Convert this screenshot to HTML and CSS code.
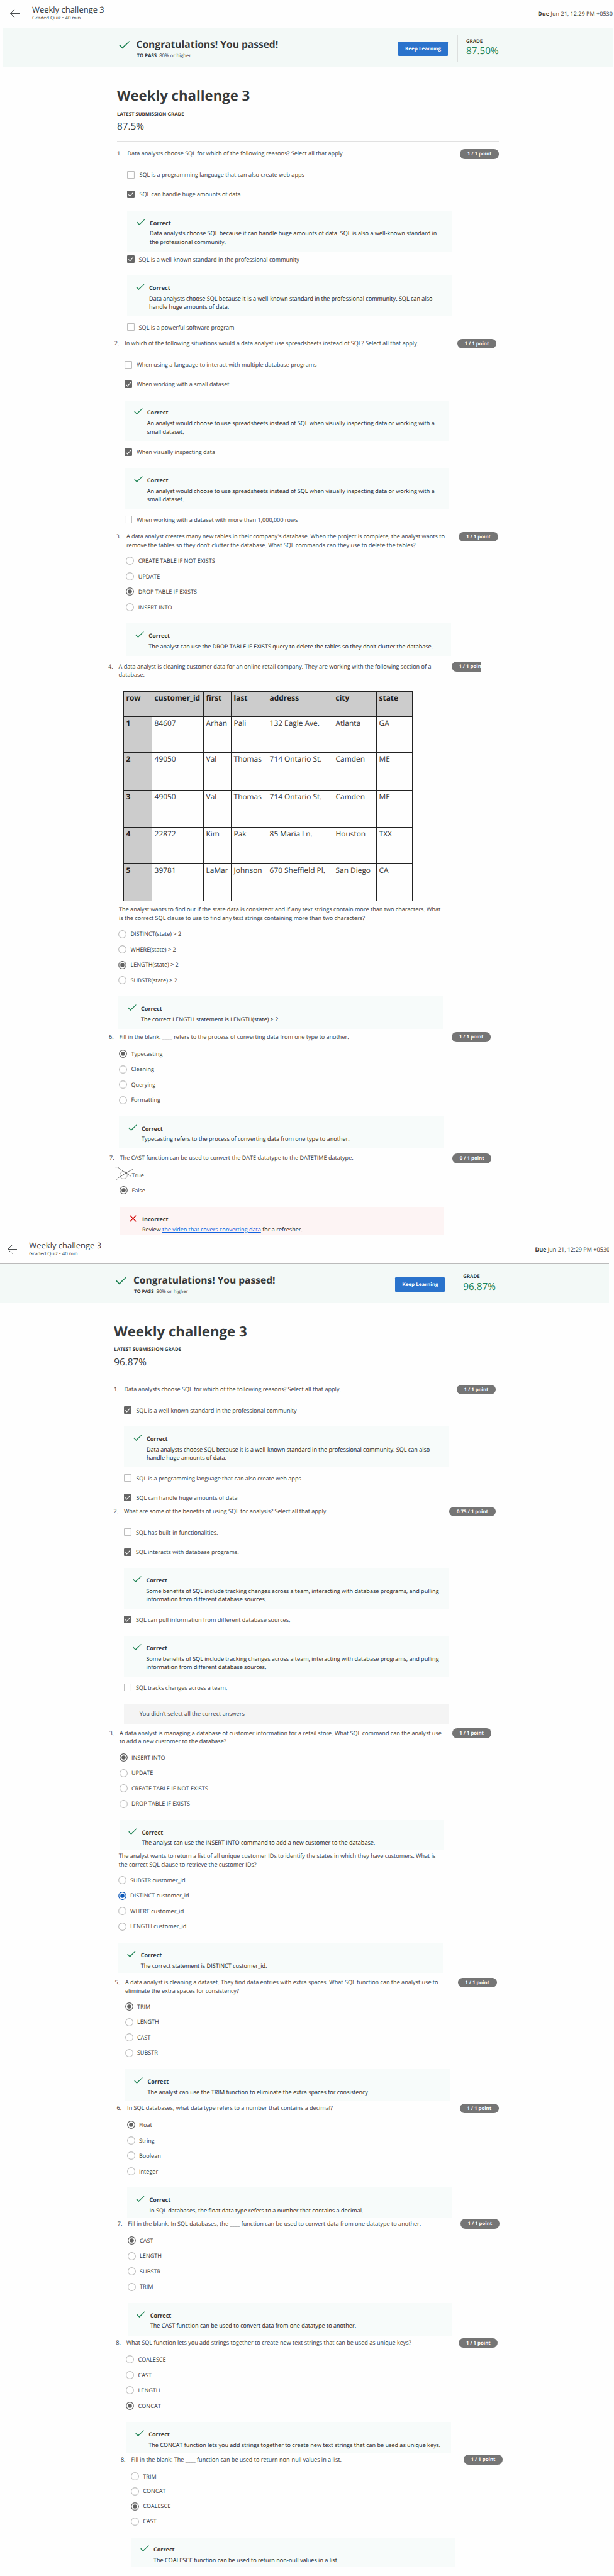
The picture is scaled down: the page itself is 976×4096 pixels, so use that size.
FILE: index.html
```html
<!DOCTYPE html>
<html lang="en">
<head>
<meta charset="utf-8">
<title>Weekly challenge 3</title>
<link rel="stylesheet" href="styles.css">
</head>
<body>
<svg class="sprite" aria-hidden="true">
  <symbol id="back" viewBox="0 0 15 15"><path d="M15 7.5H.6M7.6.5L.6 7.5l7 7" fill="none" stroke="#373a3c" stroke-width=".9"/></symbol>
  <symbol id="check" viewBox="0 0 18 13"><path d="M.2 7.2L1.6 6l4 4.2L16.6.3l1.2.6L5.8 12.8z" fill="#1f8354"/></symbol>
  <symbol id="cross" viewBox="0 0 11 11"><path d="M.6.8L10.4 10.2M10.4.8L.6 10.2" fill="none" stroke="#d30001" stroke-width="1.5"/></symbol>
  <symbol id="on" viewBox="0 0 12 12"><rect width="12" height="12" rx="1.2" fill="#666"/><path d="M2.3 6.4l2.3 2.4L9.8 3.2" fill="none" stroke="#fff" stroke-width="1.2"/></symbol>
  <symbol id="off" viewBox="0 0 12 12"><rect x=".55" y=".55" width="10.9" height="10.9" rx=".8" fill="#fff" stroke="#bdbdbd" stroke-width="1.1"/></symbol>
  <symbol id="radio" viewBox="0 0 13 13"><circle cx="6.5" cy="6.5" r="5.9" fill="#fff" stroke="#bdbdbd" stroke-width="1.1"/></symbol>
  <symbol id="picked" viewBox="0 0 13 13"><circle cx="6.5" cy="6.5" r="5.8" fill="#fff" stroke="currentColor" stroke-width="1.2"/><circle cx="6.5" cy="6.5" r="3.3" fill="currentColor"/></symbol>
</svg>

<div class="attempt first">
 <div class="sheet">
  <header class="topbar">
    <svg class="back"><use href="#back"/></svg>
    <div class="quiz"><div class="name">Weekly challenge 3</div><div class="kind">Graded Quiz • 40 min</div></div>
    <div class="due"><b>Due</b> Jun 21, 12:29 PM +0530</div>
  </header>
  <div class="band">
    <svg class="passed"><use href="#check"/></svg>
    <div class="result"><div class="congrats">Congratulations! You passed!</div><div class="topass"><b>TO PASS</b> <span>80% or higher</span></div></div>
    <div class="button">Keep Learning</div>
    <div class="grade"><b>GRADE</b><span>87.50%</span></div>
  </div>
  <div class="intro">
    <h1>Weekly challenge 3</h1>
    <div class="latest">LATEST SUBMISSION GRADE</div>
    <div class="score">87.5%</div>
  </div>

  <section class="q a1 multi">
    <div class="head"><span class="num">1.</span><p>Data analysts choose SQL for which of the following reasons? Select all that apply.</p><span class="pill">1 / 1 point</span></div>
    <div class="opt"><svg><use href="#off"/></svg>SQL is a programming language that can also create web apps</div>
    <div class="opt"><svg><use href="#on"/></svg>SQL can handle huge amounts of data</div>
    <div class="fb"><svg><use href="#check"/></svg><div><b>Correct</b><p>Data analysts choose SQL because it can handle huge amounts of data. SQL is also a well-known standard in<br>the professional community.</p></div></div>
    <div class="opt tight"><svg><use href="#on"/></svg>SQL is a well-known standard in the professional community</div>
    <div class="fb nudge"><svg><use href="#check"/></svg><div><b>Correct</b><p>Data analysts choose SQL because it is a well-known standard in the professional community. SQL can also<br>handle huge amounts of data.</p></div></div>
    <div class="opt nudge"><svg><use href="#off"/></svg>SQL is a powerful software program</div>
  </section>

  <section class="q a2 multi">
    <div class="head"><span class="num">2.</span><p>In which of the following situations would a data analyst use spreadsheets instead of SQL? Select all that apply.</p><span class="pill">1 / 1 point</span></div>
    <div class="opt"><svg><use href="#off"/></svg>When using a language to interact with multiple database programs</div>
    <div class="opt"><svg><use href="#on"/></svg>When working with a small dataset</div>
    <div class="fb"><svg><use href="#check"/></svg><div><b>Correct</b><p>An analyst would choose to use spreadsheets instead of SQL when visually inspecting data or working with a<br>small dataset.</p></div></div>
    <div class="opt"><svg><use href="#on"/></svg>When visually inspecting data</div>
    <div class="fb"><svg><use href="#check"/></svg><div><b>Correct</b><p>An analyst would choose to use spreadsheets instead of SQL when visually inspecting data or working with a<br>small dataset.</p></div></div>
    <div class="opt"><svg><use href="#off"/></svg>When working with a dataset with more than 1,000,000 rows</div>
  </section>

  <section class="q a3">
    <div class="head two"><span class="num">3.</span><p>A data analyst creates many new tables in their company's database. When the project is complete, the analyst wants to<br>remove the tables so they don’t clutter the database. What SQL commands can they use to delete the tables?</p><span class="pill">1 / 1 point</span></div>
    <div class="opt"><svg><use href="#radio"/></svg>CREATE TABLE IF NOT EXISTS</div>
    <div class="opt"><svg><use href="#radio"/></svg>UPDATE</div>
    <div class="opt"><svg><use href="#picked"/></svg>DROP TABLE IF EXISTS</div>
    <div class="opt"><svg><use href="#radio"/></svg>INSERT INTO</div>
    <div class="fb"><svg><use href="#check"/></svg><div><b>Correct</b><p>The analyst can use the DROP TABLE IF EXISTS query to delete the tables so they don’t clutter the database.</p></div></div>
  </section>

  <section class="q a4">
    <div class="head data"><span class="num">4.</span><p>A data analyst is cleaning customer data for an online retail company. They are working with the following section of a<br>database:</p><span class="pill cut">1 / 1 poin</span></div>
    <table>
      <colgroup><col class="c1"><col class="c2"><col class="c3"><col class="c4"><col class="c5"><col class="c6"><col class="c7"></colgroup>
      <tr class="r0"><th>row</th><th>customer_id</th><th>first</th><th>last</th><th>address</th><th>city</th><th>state</th></tr>
      <tr class="r1"><th>1</th><td>84607</td><td>Arhan</td><td>Pali</td><td>132 Eagle Ave.</td><td>Atlanta</td><td>GA</td></tr>
      <tr class="r2"><th>2</th><td>49050</td><td>Val</td><td>Thomas</td><td>714 Ontario St.</td><td>Camden</td><td>ME</td></tr>
      <tr class="r3"><th>3</th><td>49050</td><td>Val</td><td>Thomas</td><td>714 Ontario St.</td><td>Camden</td><td>ME</td></tr>
      <tr class="r4"><th>4</th><td>22872</td><td>Kim</td><td>Pak</td><td>85 Maria Ln.</td><td>Houston</td><td>TXX</td></tr>
      <tr class="r5"><th>5</th><td>39781</td><td>LaMar</td><td>Johnson</td><td>670 Sheffield Pl.</td><td>San Diego</td><td>CA</td></tr>
    </table>
    <div class="head two para"><p>The analyst wants to find out if the state data is consistent and if any text strings contain more than two characters. What<br>is the correct SQL clause to use to find any text strings containing more than two characters?</p></div>
    <div class="opt"><svg><use href="#radio"/></svg>DISTINCT(state) &gt; 2</div>
    <div class="opt"><svg><use href="#radio"/></svg>WHERE(state) &gt; 2</div>
    <div class="opt"><svg><use href="#picked"/></svg>LENGTH(state) &gt; 2</div>
    <div class="opt"><svg><use href="#radio"/></svg>SUBSTR(state) &gt; 2</div>
    <div class="fb"><svg><use href="#check"/></svg><div><b>Correct</b><p>The correct LENGTH statement is LENGTH(state) &gt; 2.</p></div></div>
  </section>

  <section class="q a6">
    <div class="head"><span class="num">6.</span><p>Fill in the blank: ____ refers to the process of converting data from one type to another.</p><span class="pill">1 / 1 point</span></div>
    <div class="opt"><svg><use href="#picked"/></svg>Typecasting</div>
    <div class="opt"><svg><use href="#radio"/></svg>Cleaning</div>
    <div class="opt"><svg><use href="#radio"/></svg>Querying</div>
    <div class="opt"><svg><use href="#radio"/></svg>Formatting</div>
    <div class="fb"><svg><use href="#check"/></svg><div><b>Correct</b><p>Typecasting refers to the process of converting data from one type to another.</p></div></div>
  </section>

  <section class="q a7">
    <div class="head"><span class="num">7.</span><p>The CAST function can be used to convert the DATE datatype to the DATETIME datatype.</p><span class="pill">0 / 1 point</span></div>
    <div class="opt struck"><svg><use href="#radio"/></svg>True<svg class="scribble" viewBox="0 0 29 21"><path d="M0 .6h4l2.5 2 3 2.2 1.5 1.5 3.500 2.400 4 1.800 3 2 2 2.300h1.500M28 4.500l-4.500 2-4 2.300-5 3-4.500 3-4.500 2.500-3 3.400" fill="none" stroke="#111" stroke-width=".6"/></svg></div>
    <div class="opt"><svg><use href="#picked"/></svg>False</div>
    <div class="fb wrong"><svg><use href="#cross"/></svg><div><b>Incorrect</b><p>Review <a>the video that covers converting data</a> for a refresher.</p></div></div>
  </section>
 </div>
</div>

<div class="attempt second">
 <div class="sheet">
  <header class="topbar">
    <svg class="back"><use href="#back"/></svg>
    <div class="quiz"><div class="name">Weekly challenge 3</div><div class="kind">Graded Quiz • 40 min</div></div>
    <div class="due"><b>Due</b> Jun 21, 12:29 PM +0530</div>
  </header>
  <div class="band">
    <svg class="passed"><use href="#check"/></svg>
    <div class="result"><div class="congrats">Congratulations! You passed!</div><div class="topass"><b>TO PASS</b> <span>80% or higher</span></div></div>
    <div class="button">Keep Learning</div>
    <div class="grade"><b>GRADE</b><span>96.87%</span></div>
  </div>
  <div class="intro">
    <h1>Weekly challenge 3</h1>
    <div class="latest">LATEST SUBMISSION GRADE</div>
    <div class="score">96.87%</div>
  </div>

  <section class="q b1 multi">
    <div class="head"><span class="num">1.</span><p>Data analysts choose SQL for which of the following reasons? Select all that apply.</p><span class="pill">1 / 1 point</span></div>
    <div class="opt"><svg><use href="#on"/></svg>SQL is a well-known standard in the professional community</div>
    <div class="fb"><svg><use href="#check"/></svg><div><b>Correct</b><p>Data analysts choose SQL because it is a well-known standard in the professional community. SQL can also<br>handle huge amounts of data.</p></div></div>
    <div class="opt"><svg><use href="#off"/></svg>SQL is a programming language that can also create web apps</div>
    <div class="opt"><svg><use href="#on"/></svg>SQL can handle huge amounts of data</div>
  </section>

  <section class="q b2 multi">
    <div class="head"><span class="num">2.</span><p>What are some of the benefits of using SQL for analysis? Select all that apply.</p><span class="pill">0.75 / 1 point</span></div>
    <div class="opt"><svg><use href="#off"/></svg>SQL has built-in functionalities.</div>
    <div class="opt"><svg><use href="#on"/></svg>SQL interacts with database programs.</div>
    <div class="fb"><svg><use href="#check"/></svg><div><b>Correct</b><p>Some benefits of SQL include tracking changes across a team, interacting with database programs, and pulling<br>information from different database sources.</p></div></div>
    <div class="opt"><svg><use href="#on"/></svg>SQL can pull information from different database sources.</div>
    <div class="fb"><svg><use href="#check"/></svg><div><b>Correct</b><p>Some benefits of SQL include tracking changes across a team, interacting with database programs, and pulling<br>information from different database sources.</p></div></div>
    <div class="opt"><svg><use href="#off"/></svg>SQL tracks changes across a team.</div>
    <div class="note">You didn’t select all the correct answers</div>
  </section>

  <section class="q b3">
    <div class="head two"><span class="num">3.</span><p>A data analyst is managing a database of customer information for a retail store. What SQL command can the analyst use<br>to add a new customer to the database?</p><span class="pill">1 / 1 point</span></div>
    <div class="opt"><svg><use href="#picked"/></svg>INSERT INTO</div>
    <div class="opt"><svg><use href="#radio"/></svg>UPDATE</div>
    <div class="opt"><svg><use href="#radio"/></svg>CREATE TABLE IF NOT EXISTS</div>
    <div class="opt"><svg><use href="#radio"/></svg>DROP TABLE IF EXISTS</div>
    <div class="fb"><svg><use href="#check"/></svg><div><b>Correct</b><p>The analyst can use the INSERT INTO command to add a new customer to the database.</p></div></div>
  </section>

  <section class="q b4">
    <div class="head two para"><p>The analyst wants to return a list of all unique customer IDs to identify the states in which they have customers. What is<br>the correct SQL clause to retrieve the customer IDs?</p></div>
    <div class="opt"><svg><use href="#radio"/></svg>SUBSTR customer_id</div>
    <div class="opt"><svg class="focus"><use href="#picked"/></svg>DISTINCT customer_id</div>
    <div class="opt"><svg><use href="#radio"/></svg>WHERE customer_id</div>
    <div class="opt"><svg><use href="#radio"/></svg>LENGTH customer_id</div>
    <div class="fb"><svg><use href="#check"/></svg><div><b>Correct</b><p>The correct statement is DISTINCT customer_id.</p></div></div>
  </section>

  <section class="q b5">
    <div class="head two"><span class="num">5.</span><p>A data analyst is cleaning a dataset. They find data entries with extra spaces. What SQL function can the analyst use to<br>eliminate the extra spaces for consistency?</p><span class="pill">1 / 1 point</span></div>
    <div class="opt"><svg><use href="#picked"/></svg>TRIM</div>
    <div class="opt"><svg><use href="#radio"/></svg>LENGTH</div>
    <div class="opt"><svg><use href="#radio"/></svg>CAST</div>
    <div class="opt"><svg><use href="#radio"/></svg>SUBSTR</div>
    <div class="fb"><svg><use href="#check"/></svg><div><b>Correct</b><p>The analyst can use the TRIM function to eliminate the extra spaces for consistency.</p></div></div>
  </section>

  <section class="q b6">
    <div class="head"><span class="num">6.</span><p>In SQL databases, what data type refers to a number that contains a decimal?</p><span class="pill">1 / 1 point</span></div>
    <div class="opt"><svg><use href="#picked"/></svg>Float</div>
    <div class="opt"><svg><use href="#radio"/></svg>String</div>
    <div class="opt"><svg><use href="#radio"/></svg>Boolean</div>
    <div class="opt"><svg><use href="#radio"/></svg>Integer</div>
    <div class="fb"><svg><use href="#check"/></svg><div><b>Correct</b><p>In SQL databases, the float data type refers to a number that contains a decimal.</p></div></div>
  </section>

  <section class="q b7">
    <div class="head"><span class="num">7.</span><p>Fill in the blank: In SQL databases, the ____ function can be used to convert data from one datatype to another.</p><span class="pill">1 / 1 point</span></div>
    <div class="opt"><svg><use href="#picked"/></svg>CAST</div>
    <div class="opt"><svg><use href="#radio"/></svg>LENGTH</div>
    <div class="opt"><svg><use href="#radio"/></svg>SUBSTR</div>
    <div class="opt"><svg><use href="#radio"/></svg>TRIM</div>
    <div class="fb"><svg><use href="#check"/></svg><div><b>Correct</b><p>The CAST function can be used to convert data from one datatype to another.</p></div></div>
  </section>

  <section class="q b8">
    <div class="head"><span class="num">8.</span><p>What SQL function lets you add strings together to create new text strings that can be used as unique keys?</p><span class="pill">1 / 1 point</span></div>
    <div class="opt"><svg><use href="#radio"/></svg>COALESCE</div>
    <div class="opt"><svg><use href="#radio"/></svg>CAST</div>
    <div class="opt"><svg><use href="#radio"/></svg>LENGTH</div>
    <div class="opt"><svg><use href="#picked"/></svg>CONCAT</div>
    <div class="fb"><svg><use href="#check"/></svg><div><b>Correct</b><p>The CONCAT function lets you add strings together to create new text strings that can be used as unique keys.</p></div></div>
  </section>

  <section class="q b9">
    <div class="head"><span class="num">8.</span><p>Fill in the blank: The ____ function can be used to return non-null values in a list.</p><span class="pill">1 / 1 point</span></div>
    <div class="opt"><svg><use href="#radio"/></svg>TRIM</div>
    <div class="opt"><svg><use href="#radio"/></svg>CONCAT</div>
    <div class="opt"><svg><use href="#picked"/></svg>COALESCE</div>
    <div class="opt"><svg><use href="#radio"/></svg>CAST</div>
    <div class="fb"><svg><use href="#check"/></svg><div><b>Correct</b><p>The COALESCE function can be used to return non-null values in a list.</p></div></div>
  </section>
 </div>
</div>
</body>
</html>
```
FILE: styles.css
```css
* { box-sizing: border-box; margin: 0; padding: 0; }
body { background: #fefefe; color: #373a3c; font: 9.08px/13.6px "Open Sans", "Noto Sans", sans-serif; text-rendering: geometricPrecision; white-space: nowrap; }
svg { display: block; flex: none; }
b { font-weight: 700; }
.sprite { display: none; }

.attempt { overflow: hidden; }
.sheet { width: 976px; }
.first { height: 1964.5px; }
.second { width: 968px; height: 2131.5px; }
.second .sheet { margin-left: -4.7px; }

/* Top bar */
.topbar { display: flex; height: 45.3px; padding: 0 2px 0 16.2px; border-bottom: 1px solid #bbb; }
.back { width: 15px; height: 15px; margin-top: 14.1px; }
.quiz { margin: 8.4px 0 0 19.8px; }
.name { font-size: 12.98px; line-height: 15px; }
.kind { font-size: 7.79px; line-height: 13px; }
.due { margin: 15.1px 0 0 auto; }

/* Result band */
.band { display: flex; height: 62px; margin: 0 2px 0 4.4px; padding-left: 184.2px; background: #f3f9f7; }
.second .band { margin-right: 0; }
.passed { width: 17.6px; height: 12.7px; margin-top: 20.2px; }
.result { width: 426.8px; padding-left: 10.4px; }
.congrats { height: 20px; margin-top: 15px; font-size: 15.57px; line-height: 20px; font-weight: 700; }
.topass { margin-top: 2.8px; padding-left: 1px; font-size: 7.79px; }
.topass span { margin-left: 2px; }
.button { width: 79.2px; height: 23.4px; margin-top: 20.8px; border-radius: 1.3px; background: #2a73cc; color: #fff; font-size: 8px; line-height: 23.8px; font-weight: 700; text-align: center; }
.grade { height: 43.8px; margin: 9.3px 0 0 15.2px; padding: 5.2px 0 0 12.6px; border-left: 1px solid #dcdfde; }
.grade b { display: block; font-size: 7.79px; }
.grade span { display: block; font-size: 15.3px; line-height: 17px; color: #1f8354; }

/* Quiz heading */
.intro { width: 607.2px; height: 118.2px; margin: 0 0 12px 186px; padding-top: 29.9px; border-bottom: 1px solid #e1e1e1; }
h1 { font-size: 22.2px; line-height: 30px; font-weight: 700; }
.latest { margin-top: 8.7px; font-size: 7.79px; line-height: 12px; font-weight: 700; }
.score { margin-top: 3.5px; font-size: 15.3px; line-height: 20px; }

/* Questions */
.q { width: 607.2px; }
.head { display: flex; height: 21.65px; }
.head.two { height: 33.45px; }
.multi .head { height: 24.95px; }
.num { width: 16.5px; }
.pill { min-width: 62px; height: 15.6px; margin: -.4px 0 0 auto; padding: 0 11.7px; border-radius: 7.8px; background: #757575; color: #fff; font-size: 7.79px; line-height: 16.4px; font-weight: 700; }
.opt { position: relative; display: flex; align-items: center; gap: 6.3px; height: 24.53px; margin-left: 16.1px; }
.opt svg { width: 13px; height: 13px; color: #616161; }
.opt svg.focus { color: #0b57b8; }
.multi .opt { gap: 7.1px; height: 31.1px; margin-left: 16.4px; }
.multi .opt svg { width: 12px; height: 12px; }

.fb { display: flex; width: 516px; height: 51.4px; margin: 13.6px 0 0 16.4px; padding-left: 14.4px; background: #f7fbfa; }
.fb svg { width: 14px; height: 10.3px; margin: 12.9px 7.2px 0 0; }
.fb b { display: block; margin-top: 12.8px; }
.fb p { margin-top: 3.1px; color: #222; }
.multi .fb { height: 65px; margin: 10.3px 0 1.5px 16.4px; }
.wrong { background: #fdf4f4; padding-left: 16px; }
.wrong svg { width: 11px; height: 11px; margin-right: 8.5px; }
.wrong a { color: #0f62e0; text-decoration: underline; }
.note { width: 516px; height: 31.5px; margin: 10.3px 0 0 16.4px; padding-left: 25px; background: #f4f4f4; line-height: 32.6px; }
.opt svg.scribble { position: absolute; left: -7.5px; top: -.8px; width: 29px; height: 21px; }

/* Section placement */
.a1 { height: 301.6px; margin-left: 186px; }
.a2 { height: 307.2px; margin-left: 181.8px; }
.a3 { height: 206.3px; margin-left: 184.4px; }
.a4 { height: 589.1px; margin-left: 172.1px; }
.a6 { height: 192.8px; margin-left: 173px; }
.a7 { height: 130px; margin-left: 174.1px; }
.b1 { height: 194px; margin-left: 185.6px; }
.b2 { height: 352.9px; margin-left: 185.1px; }
.b3 { height: 195.1px; margin-left: 178.2px; }
.b4 { height: 201px; margin-left: 176.4px; }
.b5 { height: 200.1px; margin-left: 187.2px; }
.b6 { height: 183.6px; margin-left: 190.3px; }
.b7 { height: 189.3px; margin-left: 191.4px; }
.b8 { height: 185.8px; margin-left: 188.9px; }
.b9 { height: 192px; margin-left: 196.6px; }
.a1 .tight { margin: -4.5px 0 0 15.5px; }
.a1 .fb.nudge, .a1 .opt.nudge { margin-left: 15.5px; }
.a4 .fb, .b7 .fb { height: 51.9px; }
.a7 .fb { height: 45.1px; }
.b3 .fb { height: 46.8px; }
.b4 .fb { height: 47.7px; }
.b5 .fb { height: 50.1px; }
.b6 .fb, .b8 .fb { height: 48.4px; }
.b9 .fb { height: 47.8px; }
.b9 .opt { height: 23.9px; }
.para { margin-left: 17px; }
.head.data { height: 46.4px; }
.pill.cut { min-width: 0; width: 47px; margin-right: 14.6px; padding-right: 0; border-radius: 7.8px 0 0 7.8px; }

/* Customer table */
table { width: 460px; margin: 0 0 6.4px 23.9px; border-collapse: collapse; table-layout: fixed; font-size: 11.9px; line-height: 16px; color: #333; }
th, td { border: 1px solid #222; padding: 2px 0 0 3.6px; text-align: left; vertical-align: top; font-weight: 400; }
th { background: #ccc; font-weight: 700; color: #222; }
.c1 { width: 45px; } .c2 { width: 82px; } .c3 { width: 44px; } .c4 { width: 57px; } .c5 { width: 105px; } .c6 { width: 69px; } .c7 { width: 57px; }
.r0 { height: 40px; } .r1 { height: 57px; } .r2 { height: 60px; } .r3 { height: 59px; } .r4 { height: 58px; } .r5 { height: 59px; }
```
